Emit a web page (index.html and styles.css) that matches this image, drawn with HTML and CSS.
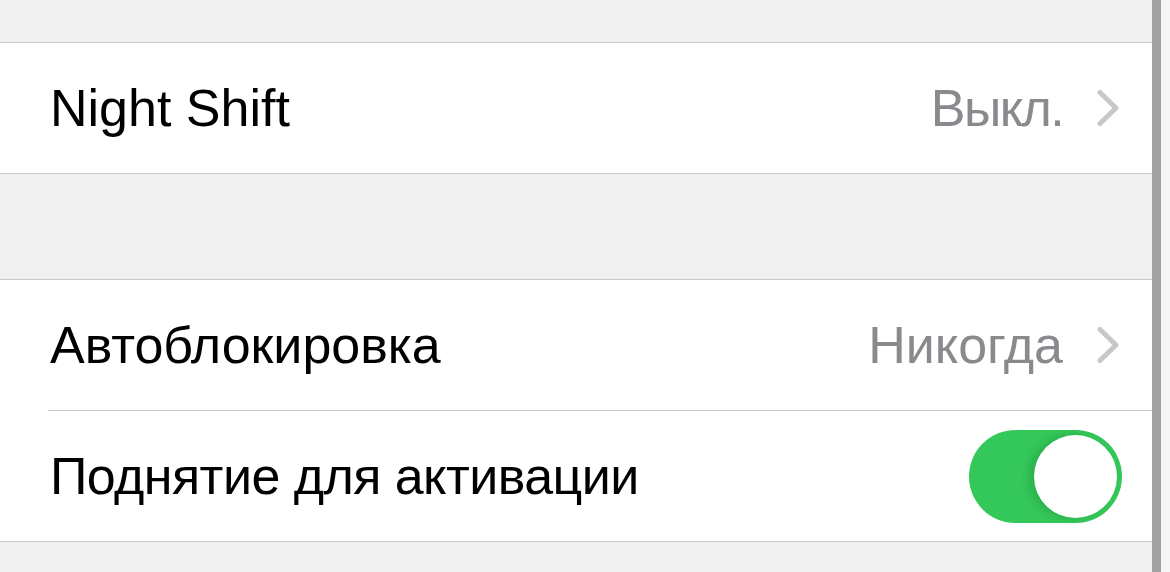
FILE: index.html
```html
<!DOCTYPE html>
<html lang="ru">
<head>
<meta charset="utf-8">
<link rel="stylesheet" href="styles.css">
</head>
<body>
<div class="page">
  <main class="content">
    <div class="spacer-top"></div>
    <section class="group">
      <div class="row">
        <span class="label">Night Shift</span>
        <span class="detail">
          <span class="value value-short">Выкл.</span>
          <svg class="chevron" width="24" height="38" viewBox="0 0 24 38"><path d="M4 3.5 L20 19 L4 34.5" fill="none" stroke="#c7c7cc" stroke-width="5" stroke-linecap="round" stroke-linejoin="round"/></svg>
        </span>
      </div>
    </section>
    <div class="spacer-mid"></div>
    <section class="group">
      <div class="row">
        <span class="label">Автоблокировка</span>
        <span class="detail">
          <span class="value">Никогда</span>
          <svg class="chevron" width="24" height="38" viewBox="0 0 24 38"><path d="M4 3.5 L20 19 L4 34.5" fill="none" stroke="#c7c7cc" stroke-width="5" stroke-linecap="round" stroke-linejoin="round"/></svg>
        </span>
      </div>
      <div class="sep"></div>
      <div class="row row-toggle">
        <span class="label label-tight">Поднятие для активации</span>
        <span class="toggle on"><span class="knob"></span></span>
      </div>
    </section>
  </main>
  <div class="scrollbar"></div>
  <div class="track"></div>
</div>
</body>
</html>
```

FILE: styles.css
```css
html, body {
  margin: 0;
  padding: 0;
}
body {
  background: #f0f0f1;
  font-family: "Liberation Sans", Arial, sans-serif;
  color: #000;
}
.page {
  display: flex;
  height: 572px;
  overflow: hidden;
}
.content {
  flex: 1;
  display: flex;
  flex-direction: column;
}
.spacer-top {
  height: 42px;
  flex: none;
}
.spacer-mid {
  height: 105px;
  flex: none;
}
.group {
  background: #fff;
  border-top: 1px solid #c8c7cc;
  border-bottom: 1px solid #c8c7cc;
  flex: none;
}
.row {
  height: 130px;
  display: flex;
  align-items: center;
  justify-content: space-between;
  padding: 0 32px 0 50px;
}
.row-toggle {
  padding-right: 30px;
}
.label {
  font-size: 52px;
  line-height: 1;
}
.label-tight {
  letter-spacing: -0.55px;
}
.detail {
  display: flex;
  align-items: center;
  gap: 33px;
}
.value {
  font-size: 52px;
  line-height: 1;
  color: #8a8a8e;
}
.value-short {
  letter-spacing: -1.6px;
}
.chevron {
  display: block;
}
.sep {
  height: 1px;
  background: #c8c7cc;
  margin-left: 48px;
}
.toggle {
  width: 153px;
  height: 93px;
  border-radius: 47px;
  background: #34c759;
  display: flex;
  align-items: center;
  justify-content: flex-end;
  padding: 0 5px;
  box-sizing: border-box;
}
.knob {
  width: 83px;
  height: 83px;
  border-radius: 50%;
  background: #fff;
  box-shadow: -5px 0 9px rgba(0, 80, 20, 0.2);
}
.scrollbar {
  width: 9px;
  flex: none;
  background: #a2a2a2;
}
.track {
  width: 9px;
  flex: none;
  background: #f6f6f6;
}
```
